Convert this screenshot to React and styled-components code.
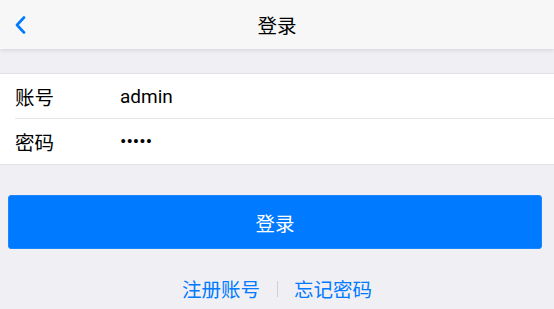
import React from "react";
import styled, { createGlobalStyle } from "styled-components";

const Global = createGlobalStyle`
  html, body { margin: 0; padding: 0; background: #efeff4; }
  body { font-family: Roboto, "Noto Sans CJK SC", "Noto Sans", sans-serif; -webkit-font-smoothing: antialiased; }
  * { box-sizing: border-box; }
`;

const Page = styled.div`
  width: 554px;
  height: 309px;
  background: #efeff4;
  display: flex;
  flex-direction: column;
  overflow: hidden;
`;

const Bar = styled.header`
  height: 49px;
  flex: none;
  background: #f7f7f7;
  box-shadow: 0 1px 5px rgba(0, 0, 0, 0.12);
  display: grid;
  grid-template-columns: 60px 1fr 60px;
  align-items: center;
  position: relative;
  z-index: 1;
`;

const Back = styled.button`
  border: 0;
  background: none;
  padding: 0 0 0 15px;
  height: 49px;
  display: flex;
  align-items: center;
  color: #007aff;
`;

const Title = styled.h1`
  margin: 0;
  text-align: center;
  font-size: 19.5px;
  font-weight: 400;
  color: #000;
`;

const Form = styled.div`
  margin-top: 24px;
  background: #fff;
  border-top: 1px solid #e3e3e8;
  border-bottom: 1px solid #e3e3e8;
`;

const Row = styled.div`
  height: 45px;
  display: flex;
  align-items: center;
  position: relative;
  ${(p) =>
    p.$divider &&
    `&::after{content:"";position:absolute;left:15px;right:0;bottom:0;height:1px;background:#e6e6e6;}`}
`;

const Label = styled.label`
  width: 120px;
  padding-left: 15px;
  font-size: 19.5px;
  color: #000;
  flex: none;
`;

const Input = styled.input`
  flex: 1;
  border: 0;
  outline: none;
  background: transparent;
  padding: 0;
  font-family: Roboto, "Noto Sans CJK SC", sans-serif;
  font-size: 19px;
  color: #000;
`;

const Actions = styled.div`
  padding: 30px 12px 0 8px;
`;

const Primary = styled.button`
  width: 534px;
  height: 54px;
  border: 1px solid #1a86ff;
  border-radius: 3px;
  background: #007aff;
  color: #fff;
  font-family: Roboto, "Noto Sans CJK SC", sans-serif;
  font-size: 19.5px;
`;

const Links = styled.div`
  margin-top: 25px;
  display: flex;
  justify-content: center;
  align-items: center;
`;

const LinkText = styled.a`
  color: #007aff;
  font-size: 19.5px;
  text-decoration: none;
`;

const Sep = styled.span`
  width: 1px;
  height: 16px;
  background: #cfcfd4;
  margin: 0 16px 0 17px;
`;

export default function App() {
  return (
    <Page>
      <Global />
      <Bar>
        <Back aria-label="back">
          <svg width="11" height="18" viewBox="0 0 11 18">
            <path d="M9 1.5 L2 9 L9 16.5" fill="none" stroke="#007aff" strokeWidth="2.6" strokeLinecap="round" strokeLinejoin="round" />
          </svg>
        </Back>
        <Title>登录</Title>
        <span />
      </Bar>
      <Form>
        <Row $divider>
          <Label>账号</Label>
          <Input type="text" defaultValue="admin" />
        </Row>
        <Row>
          <Label>密码</Label>
          <Input type="password" defaultValue="12345" />
        </Row>
      </Form>
      <Actions>
        <Primary>登录</Primary>
      </Actions>
      <Links>
        <LinkText>注册账号</LinkText>
        <Sep />
        <LinkText>忘记密码</LinkText>
      </Links>
    </Page>
  );
}
